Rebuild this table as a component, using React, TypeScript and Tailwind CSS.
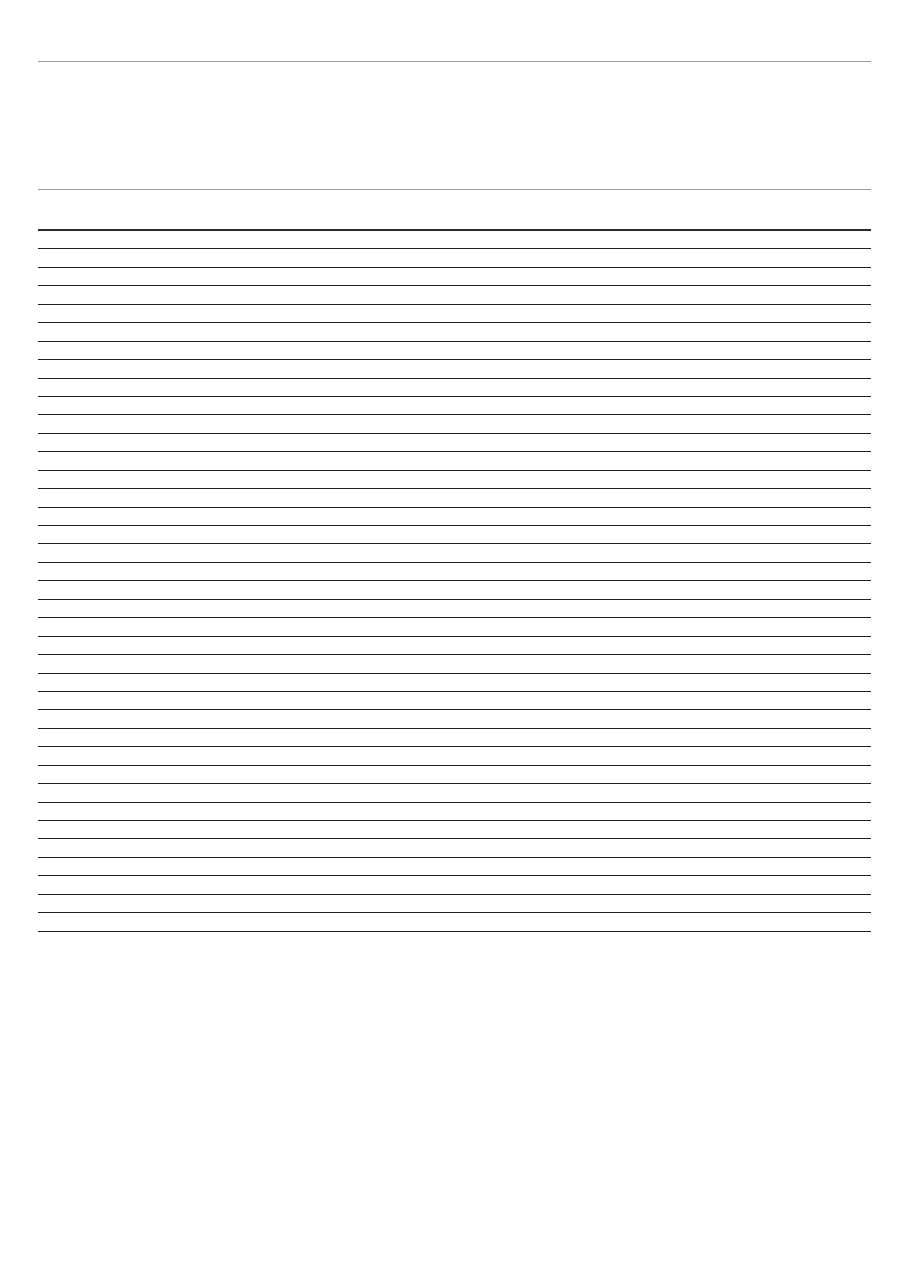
const rows = Array.from({ length: 38 }, (_, i) => i);

const App = () => {
  return (
    <div className="min-h-[1286px] bg-white px-[38px] pt-[61px] font-['Liberation_Sans',sans-serif]">
      {/* Title block */}
      <div className="h-[128px] border-t border-[#9c9c9c]" />

      {/* Sheet */}
      <div className="border-t border-[#9c9c9c]">
        <div className="h-[41px] border-b-2 border-[#2a2a2a]" />

        {rows.map((r) => (
          <div key={r} className="h-[18.44px] border-b border-[#1f1f1f]" />
        ))}
      </div>
    </div>
  );
};

export default App;
